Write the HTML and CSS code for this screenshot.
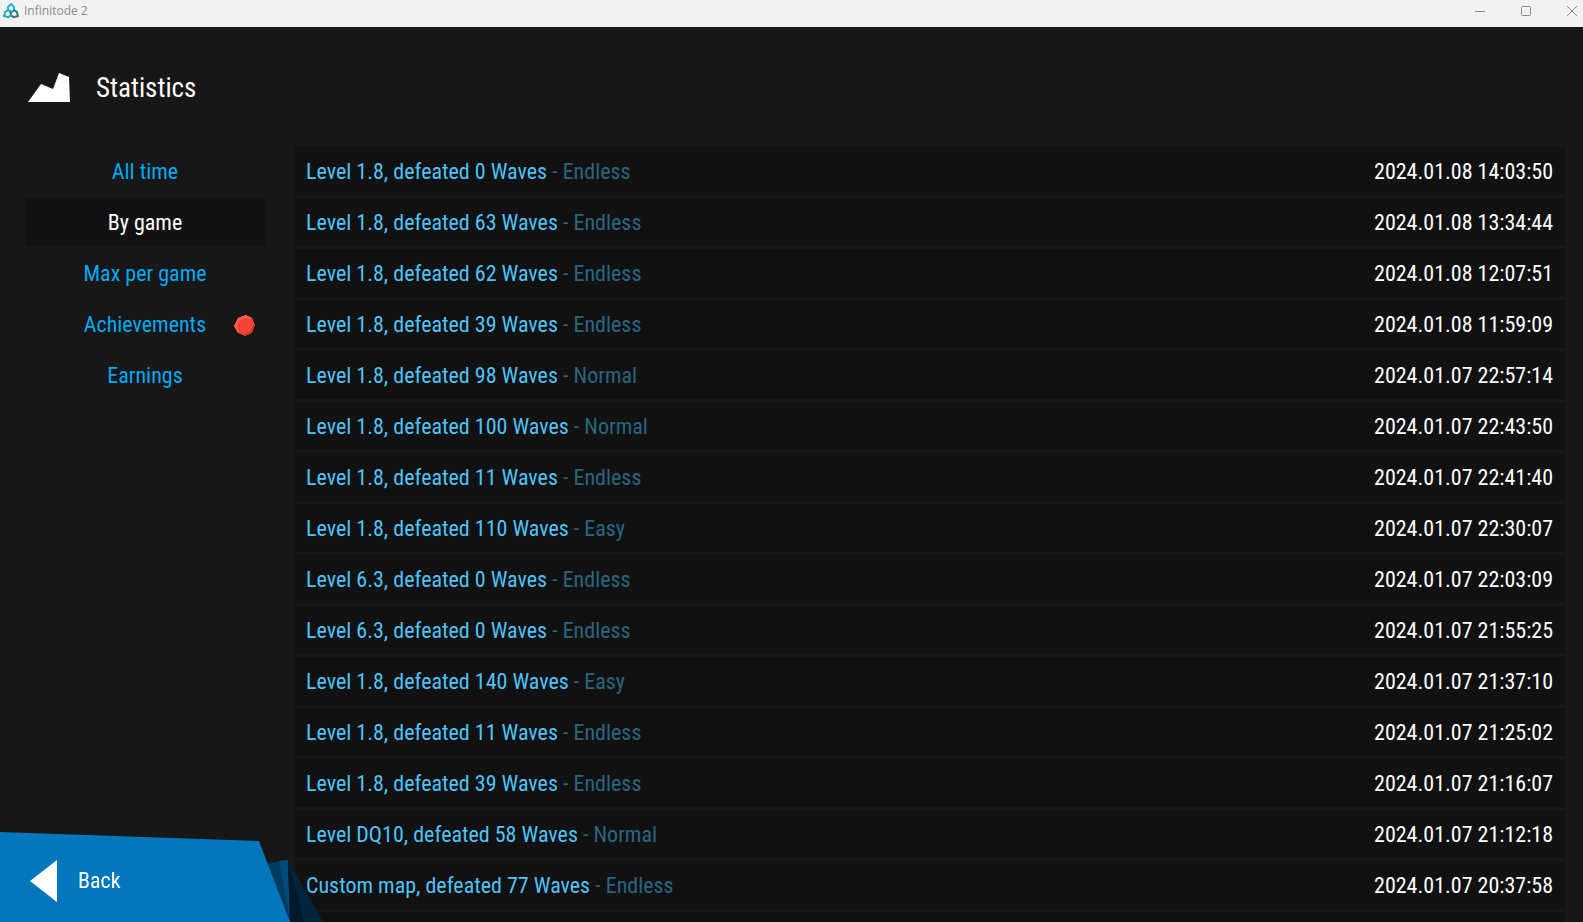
FILE: index.html
```html
<!DOCTYPE html>
<html lang="en">
<head>
  <meta charset="UTF-8">
  <meta name="viewport" content="width=device-width, initial-scale=1.0">
  <title>Infinitode 2</title>
  <link rel="stylesheet" href="styles.css">
</head>
<body>

<header class="titlebar">
  <svg class="app-logo" viewBox="0 0 16 16" width="16" height="16" fill="none" stroke-width="2">
    <path d="M5 8V4l3-3 3 3v3L8 10" stroke="#22b8c8"/>
    <path d="M5 8V4l3-3 3 3v3L8 10" stroke="#2f7680" transform="rotate(120 8 9)"/>
    <path d="M5 8V4l3-3 3 3v3L8 10" stroke="#27a9b8" transform="rotate(240 8 9)"/>
  </svg>
  <span class="app-name">Infinitode 2</span>
  <div class="window-controls">
    <button type="button" aria-label="Minimize"><svg viewBox="0 0 10 10" width="10" height="10"><path d="M0 5.5h10"/></svg></button>
    <button type="button" aria-label="Maximize"><svg viewBox="0 0 10 10" width="10" height="10"><rect x="0.5" y="0.5" width="9" height="9" rx="1"/></svg></button>
    <button type="button" aria-label="Close"><svg viewBox="0 0 10 10" width="10" height="10"><path d="M0 0l10 10M10 0L0 10"/></svg></button>
  </div>
</header>

<div class="page-title">
  <svg viewBox="0 0 42 29" width="42" height="29"><path d="M0 29L13 11l12 5L31 0l10 4 1 25z" fill="#fff"/></svg>
  <h1>Statistics</h1>
</div>

<main class="layout">
  <nav class="tabs">
    <a href="#all-time">All time</a>
    <a href="#by-game" class="active">By game</a>
    <a href="#max-per-game">Max per game</a>
    <a href="#achievements">Achievements
      <svg class="badge" viewBox="0 0 22 22" width="22" height="22">
        <path d="M6 4l7-2 6 3 3 7-3 7-7 3-7-3-2-6z" fill="#0c0c0c"/>
        <path d="M4 3l8-3 6 3 3 7-3 8-7 3-7-3-4-7z" fill="#f44336"/>
        <path d="M4 3l8-3 6 3-2 1-4-1-6 2-3 6 2 6-1 1-4-7z" fill="#ff5c50"/>
        <path d="M21 10l-3 8-7 3-1-2 6-2 3-7z" fill="#c9372c"/>
      </svg>
    </a>
    <a href="#earnings">Earnings</a>
  </nav>

  <table class="games">
    <tbody>
      <tr><td>Level 1.8, defeated 0 Waves <span class="mode">- Endless</span></td><td>2024.01.08 14:03:50</td></tr>
      <tr><td>Level 1.8, defeated 63 Waves <span class="mode">- Endless</span></td><td>2024.01.08 13:34:44</td></tr>
      <tr><td>Level 1.8, defeated 62 Waves <span class="mode">- Endless</span></td><td>2024.01.08 12:07:51</td></tr>
      <tr><td>Level 1.8, defeated 39 Waves <span class="mode">- Endless</span></td><td>2024.01.08 11:59:09</td></tr>
      <tr><td>Level 1.8, defeated 98 Waves <span class="mode">- Normal</span></td><td>2024.01.07 22:57:14</td></tr>
      <tr><td>Level 1.8, defeated 100 Waves <span class="mode">- Normal</span></td><td>2024.01.07 22:43:50</td></tr>
      <tr><td>Level 1.8, defeated 11 Waves <span class="mode">- Endless</span></td><td>2024.01.07 22:41:40</td></tr>
      <tr><td>Level 1.8, defeated 110 Waves <span class="mode">- Easy</span></td><td>2024.01.07 22:30:07</td></tr>
      <tr><td>Level 6.3, defeated 0 Waves <span class="mode">- Endless</span></td><td>2024.01.07 22:03:09</td></tr>
      <tr><td>Level 6.3, defeated 0 Waves <span class="mode">- Endless</span></td><td>2024.01.07 21:55:25</td></tr>
      <tr><td>Level 1.8, defeated 140 Waves <span class="mode">- Easy</span></td><td>2024.01.07 21:37:10</td></tr>
      <tr><td>Level 1.8, defeated 11 Waves <span class="mode">- Endless</span></td><td>2024.01.07 21:25:02</td></tr>
      <tr><td>Level 1.8, defeated 39 Waves <span class="mode">- Endless</span></td><td>2024.01.07 21:16:07</td></tr>
      <tr><td>Level DQ10, defeated 58 Waves <span class="mode">- Normal</span></td><td>2024.01.07 21:12:18</td></tr>
      <tr><td>Custom map, defeated 77 Waves <span class="mode">- Endless</span></td><td>2024.01.07 20:37:58</td></tr>
      <tr><td></td><td></td></tr>
    </tbody>
  </table>
</main>

<button type="button" class="back">
  <svg class="back-shape" viewBox="0 0 323 90" width="323" height="90">
    <path d="M267 31l21-3 2 62z" fill="#003a60"/>
    <path d="M279 29l9-1 2 62z" fill="#004b7c"/>
    <path d="M288 28l35 62h-33z" fill="#00253c"/>
    <path d="M288 28l16 62h-14z" fill="#001a2b"/>
    <path d="M0 0l259 9 31 81H0z" fill="#0277bd"/>
  </svg>
  <svg class="back-arrow" viewBox="0 0 27 42" width="27" height="42"><path d="M27 0v42L0 21z" fill="#fff"/></svg>
  <span>Back</span>
</button>

</body>
</html>
```

FILE: styles.css
```css
* {
  box-sizing: border-box;
}
body {
  margin: 0;
  height: 100vh;
  overflow: hidden;
  background-color: #171717;
  color: #ffffff;
  font-family: 'Roboto Condensed', Roboto, sans-serif;
  font-size: 22px;
  line-height: 28px;
}
button {
  border: 0;
  padding: 0;
  background: none;
  color: inherit;
  font: inherit;
  cursor: pointer;
}

/* window title bar */
.titlebar {
  display: flex;
  align-items: center;
  height: 27px;
  padding-left: 3px;
  padding-bottom: 5px;
  background-color: #f2f2f2;
  color: #8c8c8c;
}
.app-name {
  margin-left: 5px;
  font-family: 'Open Sans', sans-serif;
  font-size: 12px;
  line-height: 16px;
}
.window-controls {
  display: flex;
  margin-left: auto;
}
.window-controls button {
  display: flex;
  align-items: center;
  justify-content: center;
  width: 46px;
  height: 22px;
}
.window-controls button:last-child {
  width: 34px;
  padding-left: 12px;
}
.window-controls path,
.window-controls rect {
  fill: none;
  stroke: #8c8c8c;
}

/* page heading */
.page-title {
  display: flex;
  align-items: center;
  gap: 26px;
  height: 117px;
  padding: 4px 28px 0;
}
h1 {
  margin: 0;
  font-size: 27px;
  font-weight: 400;
  line-height: 32px;
}

/* tabs and list of games */
.layout {
  display: grid;
  grid-template-columns: 240px 1fr;
  gap: 30px;
  padding: 0 18px 0 25px;
}
.tabs {
  display: flex;
  flex-direction: column;
  gap: 3px;
  padding-top: 3px;
}
.tabs a {
  position: relative;
  padding: 11px 0 9px;
  color: #03a9f4;
  text-align: center;
  text-decoration: none;
}
.tabs .active {
  background-color: #111111;
  color: #ffffff;
}
.badge {
  position: absolute;
  top: 15px;
  right: 9px;
}
.games {
  width: 100%;
  border-collapse: separate;
  border-spacing: 0 3px;
}
.games td {
  height: 48px;
  padding: 2px 12px 0 11px;
  background-color: #111111;
  color: #4fc3f7;
  white-space: nowrap;
}
.games td:last-child {
  color: #ffffff;
  text-align: right;
}
.games .mode {
  color: #2a6580;
}

/* back button, lies over the list */
.back {
  position: fixed;
  left: 0;
  bottom: 0;
  display: flex;
  align-items: center;
  gap: 21px;
  width: 323px;
  height: 90px;
  padding: 8px 0 0 30px;
}
.back-shape {
  position: absolute;
  left: 0;
  bottom: 0;
}
.back-arrow,
.back span {
  position: relative;
}
```
